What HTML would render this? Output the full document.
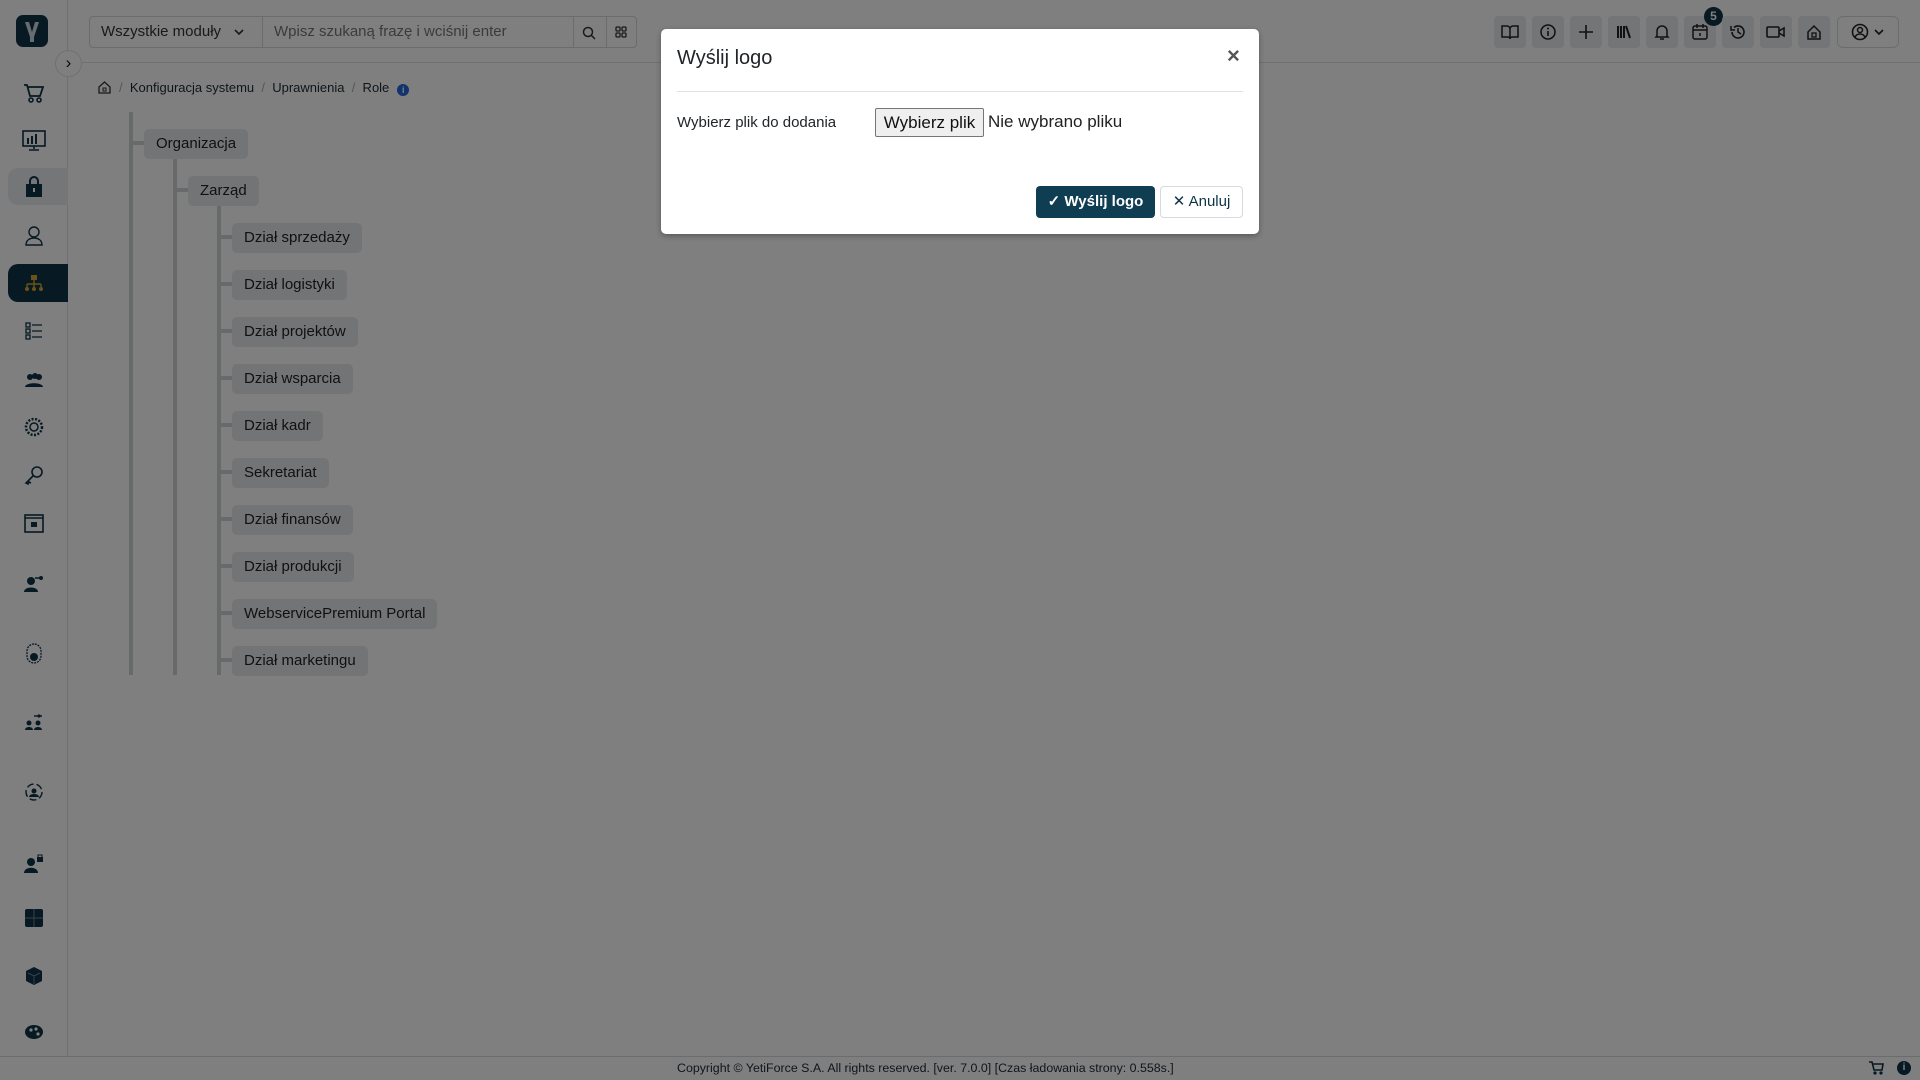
<!DOCTYPE html>
<html><head><meta charset="utf-8"><style>
*{box-sizing:border-box;margin:0;padding:0}
body{width:1920px;height:1080px;position:relative;overflow:hidden;background:#fff;font-family:"Liberation Sans",sans-serif;color:#212529}
.a{position:absolute}
.side{left:0;top:0;width:68px;height:1056px;border-right:1px solid #dde1e5;background:#fff}
.hdr{left:68px;top:0;right:0;height:63px;border-bottom:1px solid #dde1e5}
.ic{position:absolute;left:18px;width:32px;height:32px;display:flex;align-items:center;justify-content:center}
.box{position:absolute;height:30px;background:#e7e9ec;border-radius:5px;font-size:15px;line-height:30px;padding:0 12px;color:#222;white-space:nowrap}
.vl{position:absolute;width:4px;background:#cfd2d6}
.st{position:absolute;height:4px;width:11px;background:#cfd2d6}
.hb{position:absolute;top:16px;width:32px;height:32px;background:#e8eaed;border-radius:4px;display:flex;align-items:center;justify-content:center}
.ov{left:0;top:0;width:1920px;height:1080px;background:rgba(0,0,0,.5)}
</style></head><body>
<div class="a side"></div>
<div class="a hdr"></div>
<div class="a" style="left:16px;top:15px;width:32px;height:32px;background:#0f3347;border-radius:7px"><svg width="32" height="32" viewBox="0 0 32 32"><path d="M9 7 L14 22 L14 27 L18 27 L18 22 L23 7 L19 7 L16 17 L13 7Z" fill="#cfd8dc"/></svg></div>
<div class="a" style="left:55px;top:50px;width:27px;height:27px;border:1px solid #dde1e5;border-radius:50%;background:#fff;font-size:17px;text-align:center;line-height:24px;color:#111">›</div>
<!-- sidebar -->
<div class="a" style="left:8px;top:168px;width:60px;height:37px;background:#e9ecef;border-radius:10px 0 0 10px"></div>
<div class="a" style="left:8px;top:264px;width:60px;height:38px;background:#0f3347;border-radius:10px 0 0 10px"></div>
<div class="ic" style="top:77px"><svg width="22" height="20"><path d="M1 2h3l3 11h10l3-9H5" fill="none" stroke="#0f3347" stroke-width="1.8"/><circle cx="8" cy="17" r="2" fill="none" stroke="#0f3347" stroke-width="1.6"/><circle cx="16" cy="17" r="2" fill="none" stroke="#0f3347" stroke-width="1.6"/></svg></div>
<div class="ic" style="top:125px"><svg width="24" height="22"><rect x="1" y="1" width="22" height="15" fill="none" stroke="#0f3347" stroke-width="1.6"/><rect x="5" y="8" width="2" height="6" fill="#0f3347"/><rect x="9" y="6" width="2" height="8" fill="#0f3347"/><rect x="13" y="4" width="2" height="10" fill="#0f3347"/><path d="M12 16v3M7 20h10" stroke="#0f3347" stroke-width="1.6"/></svg></div>
<div class="ic" style="top:171px"><svg width="20" height="22"><path d="M6 8V5a4 4 0 0 1 8 0v3" fill="none" stroke="#0f3347" stroke-width="2"/><rect x="2" y="8" width="16" height="13" fill="#0f3347"/><rect x="9" y="12" width="2" height="4" fill="#fff"/></svg></div>
<div class="ic" style="top:219px"><svg width="22" height="22"><circle cx="11" cy="8" r="5" fill="none" stroke="#0f3347" stroke-width="1.4"/><path d="M3 21c0-5 4-7 8-7s8 2 8 7z" fill="none" stroke="#0f3347" stroke-width="1.4"/></svg></div>
<div class="ic" style="top:267px"><svg width="20" height="20"><rect x="7" y="2" width="6" height="5" fill="#d4a72c"/><path d="M10 7v4M3 11h14M3 11v3M10 11v3M17 11v3" stroke="#d4a72c" stroke-width="1.4" fill="none"/><circle cx="3" cy="16" r="2" fill="#d4a72c"/><circle cx="10" cy="16" r="2" fill="#d4a72c"/><circle cx="17" cy="16" r="2" fill="#d4a72c"/></svg></div>
<div class="ic" style="top:315px"><svg width="20" height="20"><rect x="2" y="2" width="4" height="4" fill="none" stroke="#0f3347" stroke-width="1.3"/><rect x="2" y="8" width="4" height="4" fill="none" stroke="#0f3347" stroke-width="1.3"/><rect x="2" y="14" width="4" height="4" fill="none" stroke="#0f3347" stroke-width="1.3"/><path d="M8 4h10M8 10h10M8 16h10" stroke="#0f3347" stroke-width="1.3"/></svg></div>
<div class="ic" style="top:364px"><svg width="20" height="16"><circle cx="6" cy="5" r="3" fill="#0f3347"/><circle cx="11" cy="4" r="3" fill="#0f3347"/><circle cx="15" cy="5" r="3" fill="#0f3347"/><path d="M1 15c0-5 18-5 18 0z" fill="#0f3347"/></svg></div>
<div class="ic" style="top:411px"><svg width="20" height="20"><circle cx="10" cy="10" r="8" fill="none" stroke="#0f3347" stroke-width="2.5" stroke-dasharray="2 1.5"/><circle cx="10" cy="10" r="4" fill="none" stroke="#0f3347" stroke-width="1.5"/></svg></div>
<div class="ic" style="top:459px"><svg width="20" height="20"><circle cx="13" cy="7" r="5" fill="none" stroke="#0f3347" stroke-width="1.6"/><path d="M9 11L2 18l2 1 1-2 2 1" fill="none" stroke="#0f3347" stroke-width="1.6"/></svg></div>
<div class="ic" style="top:507px"><svg width="20" height="20"><rect x="1" y="2" width="18" height="17" fill="none" stroke="#0f3347" stroke-width="1.6"/><path d="M1 5h18" stroke="#0f3347" stroke-width="1.6"/><rect x="7" y="9" width="6" height="5" fill="#0f3347"/></svg></div>
<div class="ic" style="top:567px"><svg width="20" height="20"><circle cx="7" cy="8" r="4" fill="#0f3347"/><path d="M0 19c0-6 14-6 14 0z" fill="#0f3347"/><path d="M11 5h7" stroke="#0f3347" stroke-width="1.5"/><circle cx="17" cy="5" r="2" fill="#0f3347"/></svg></div>
<div class="ic" style="top:637px"><svg width="18" height="22"><path d="M9 2a7 7 0 0 0-7 7v5a7 7 0 0 0 14 0V9a7 7 0 0 0-7-7z" fill="none" stroke="#0f3347" stroke-width="1.3" stroke-dasharray="2 1"/><circle cx="9" cy="15" r="4" fill="#0f3347"/></svg></div>
<div class="ic" style="top:706px"><svg width="20" height="16"><path d="M10 2h8" stroke="#0f3347" stroke-width="1.4"/><circle cx="15" cy="2" r="1.6" fill="#0f3347"/><circle cx="5" cy="9" r="2.5" fill="#0f3347"/><circle cx="14" cy="9" r="2.5" fill="#0f3347"/><path d="M1 16c0-4 8-4 8 0zM10 16c0-4 8-4 8 0z" fill="#0f3347"/></svg></div>
<div class="ic" style="top:776px"><svg width="20" height="20"><circle cx="10" cy="10" r="8" fill="none" stroke="#0f3347" stroke-width="1.4" stroke-dasharray="7 3"/><circle cx="10" cy="9" r="2.5" fill="#0f3347"/><path d="M5 15c0-4 10-4 10 0z" fill="#0f3347"/></svg></div>
<div class="ic" style="top:847px"><svg width="20" height="20"><circle cx="7" cy="9" r="4" fill="#0f3347"/><path d="M0 20c0-7 14-7 14 0z" fill="#0f3347"/><rect x="13" y="4" width="6" height="5" fill="#0f3347"/><path d="M14 4V2h4v2" fill="none" stroke="#0f3347"/></svg></div>
<div class="ic" style="top:902px"><svg width="20" height="20"><rect x="1" y="1" width="18" height="18" rx="2" fill="#0f3347"/><path d="M10 1v18M1 10h18" stroke="#708390" stroke-width="1"/></svg></div>
<div class="ic" style="top:960px"><svg width="20" height="20"><path d="M10 1l8 4v10l-8 4-8-4V5z" fill="#0f3347"/><path d="M4 7l6 3 6-3M10 10v8" stroke="#708390" stroke-width="1" fill="none"/></svg></div>
<div class="ic" style="top:1016px"><svg width="20" height="16"><ellipse cx="10" cy="8" rx="9" ry="7" fill="#0f3347"/><circle cx="7" cy="6" r="1.6" fill="#fff"/><circle cx="12" cy="5" r="1.6" fill="#fff"/><circle cx="14" cy="10" r="1.6" fill="#fff"/></svg></div>
<!-- header search -->
<div class="a" style="left:89px;top:16px;width:548px;height:32px;border:1px solid #d6d9dd;border-radius:4px"></div>
<div class="a" style="left:262px;top:16px;width:1px;height:32px;background:#d6d9dd"></div>
<div class="a" style="left:573px;top:16px;width:1px;height:32px;background:#d6d9dd"></div>
<div class="a" style="left:606px;top:16px;width:1px;height:32px;background:#d6d9dd"></div>
<div class="a" style="left:101px;top:23px;font-size:15px;color:#333">Wszystkie moduły</div>
<svg class="a" style="left:233px;top:27px" width="12" height="10"><path d="M2 3l4 4 4-4" stroke="#333" stroke-width="1.6" fill="none"/></svg>
<div class="a" style="left:274px;top:23px;font-size:15px;color:#777">Wpisz szukaną frazę i wciśnij enter</div>
<svg class="a" style="left:582px;top:26px" width="14" height="14"><circle cx="6" cy="6" r="4.5" stroke="#333" stroke-width="1.5" fill="none"/><path d="M9.5 9.5L13 13" stroke="#333" stroke-width="1.5"/></svg>
<svg class="a" style="left:615px;top:26px" width="12" height="12"><g fill="none" stroke="#333" stroke-width="1.3"><rect x="1" y="1" width="4" height="4" rx="1"/><rect x="7" y="1" width="4" height="4" rx="1"/><rect x="1" y="7" width="4" height="4" rx="1"/><rect x="7" y="7" width="4" height="4" rx="1"/></g></svg>
<!-- header right -->
<div class="hb" style="left:1494px"><svg width="18" height="16"><path d="M1 2h5a3 3 0 0 1 3 3v10a2 2 0 0 0-2-2H1zM17 2h-5a3 3 0 0 0-3 3v10a2 2 0 0 1 2-2h6z" fill="none" stroke="#222" stroke-width="1.5"/></svg></div>
<div class="hb" style="left:1532px"><svg width="18" height="18"><circle cx="9" cy="9" r="7" fill="none" stroke="#222" stroke-width="1.5"/><path d="M9 8v5" stroke="#222" stroke-width="1.6"/><circle cx="9" cy="5.5" r="1" fill="#222"/></svg></div>
<div class="hb" style="left:1570px"><svg width="16" height="16"><path d="M8 1v14M1 8h14" stroke="#222" stroke-width="1.6"/></svg></div>
<div class="hb" style="left:1608px"><svg width="16" height="16"><path d="M2 2v12M5 2v12M8 2v12M10 2l4 12" stroke="#222" stroke-width="2"/></svg></div>
<div class="hb" style="left:1646px"><svg width="16" height="18"><path d="M3 13V8a5 5 0 0 1 10 0v5l1 1H2z" fill="none" stroke="#222" stroke-width="1.5"/><path d="M6 16h4" stroke="#222" stroke-width="1.5"/></svg></div>
<div class="hb" style="left:1684px"><svg width="16" height="18"><rect x="1" y="3" width="14" height="13" rx="2" fill="none" stroke="#222" stroke-width="1.5"/><path d="M1 7h14M5 1v4M11 1v4M8 10v3" stroke="#222" stroke-width="1.5"/></svg></div>
<div class="a" style="left:1704px;top:7px;width:19px;height:19px;border-radius:50%;background:#0f3347;color:#fff;font-size:12px;font-weight:bold;text-align:center;line-height:19px">5</div>
<div class="hb" style="left:1722px"><svg width="18" height="18"><path d="M3 9a6 6 0 1 0 2-4.5" fill="none" stroke="#222" stroke-width="1.6"/><path d="M2 3v4h4" fill="none" stroke="#222" stroke-width="1.5"/><path d="M9 5v4l3 2" fill="none" stroke="#222" stroke-width="1.5"/></svg></div>
<div class="hb" style="left:1760px"><svg width="20" height="14"><rect x="1" y="2" width="12" height="10" rx="1" fill="none" stroke="#222" stroke-width="1.6"/><path d="M13 6l5-3v8l-5-3" fill="none" stroke="#222" stroke-width="1.6"/></svg></div>
<div class="hb" style="left:1798px"><svg width="16" height="16"><path d="M2 8l6-6 6 6v7H2z" fill="none" stroke="#222" stroke-width="1.5"/><rect x="6" y="9" width="4" height="4" fill="none" stroke="#222" stroke-width="1.3"/></svg></div>
<div class="a" style="left:1837px;top:16px;width:62px;height:32px;border:1px solid #d6d9dd;border-radius:6px"></div>
<svg class="a" style="left:1851px;top:23px" width="38" height="18"><circle cx="9" cy="9" r="7.5" fill="none" stroke="#222" stroke-width="1.6"/><circle cx="9" cy="7" r="2.5" fill="none" stroke="#222" stroke-width="1.5"/><path d="M4 14c2-4 8-4 10 0" fill="none" stroke="#222" stroke-width="1.5"/><path d="M24 7l4 4 4-4" stroke="#222" stroke-width="1.6" fill="none"/></svg>
<!-- breadcrumb -->
<svg class="a" style="left:98px;top:81px" width="13" height="13"><path d="M1 6l5.5-5 5.5 5v6H1z" fill="none" stroke="#333" stroke-width="1.3"/><rect x="5" y="7" width="3" height="3" fill="none" stroke="#333"/></svg>
<div class="a" style="left:119px;top:80px;font-size:13px;color:#1c2a33;white-space:nowrap"><span style="color:#aaa">/</span>&nbsp;&nbsp;Konfiguracja systemu&nbsp;&nbsp;<span style="color:#aaa">/</span>&nbsp;&nbsp;Uprawnienia&nbsp;&nbsp;<span style="color:#aaa">/</span>&nbsp;&nbsp;Role<span style="display:inline-block;margin-left:8px;width:12px;height:12px;border-radius:50%;background:#2767d8;color:#fff;font-size:9px;text-align:center;line-height:12px;font-weight:bold;vertical-align:-1px">i</span></div>
<!-- tree -->
<div class="vl" style="left:129px;top:112px;height:563px"></div>
<div class="vl" style="left:173px;top:159px;height:516px"></div>
<div class="vl" style="left:217px;top:205px;height:470px"></div>
<div class="st" style="left:133px;top:141px"></div><div class="box" style="left:144px;top:129px">Organizacja</div>
<div class="st" style="left:177px;top:188px"></div><div class="box" style="left:188px;top:176px">Zarząd</div>
<div class="st" style="left:221px;top:235px"></div><div class="box" style="left:232px;top:223px">Dział sprzedaży</div>
<div class="st" style="left:221px;top:282px"></div><div class="box" style="left:232px;top:270px">Dział logistyki</div>
<div class="st" style="left:221px;top:329px"></div><div class="box" style="left:232px;top:317px">Dział projektów</div>
<div class="st" style="left:221px;top:376px"></div><div class="box" style="left:232px;top:364px">Dział wsparcia</div>
<div class="st" style="left:221px;top:423px"></div><div class="box" style="left:232px;top:411px">Dział kadr</div>
<div class="st" style="left:221px;top:470px"></div><div class="box" style="left:232px;top:458px">Sekretariat</div>
<div class="st" style="left:221px;top:517px"></div><div class="box" style="left:232px;top:505px">Dział finansów</div>
<div class="st" style="left:221px;top:564px"></div><div class="box" style="left:232px;top:552px">Dział produkcji</div>
<div class="st" style="left:221px;top:611px"></div><div class="box" style="left:232px;top:599px">WebservicePremium Portal</div>
<div class="st" style="left:221px;top:658px"></div><div class="box" style="left:232px;top:646px">Dział marketingu</div>
<!-- footer -->
<div class="a" style="left:0;top:1056px;width:1920px;height:1px;background:#d6d9dd"></div>
<div class="a" style="left:677px;top:1061px;font-size:12.4px;color:#1c2a33;white-space:nowrap">Copyright © YetiForce S.A. All rights reserved. [ver. 7.0.0] [Czas ładowania strony: 0.558s.]</div>
<svg class="a" style="left:1868px;top:1060px" width="16" height="16"><path d="M1 2h3l2 8h8l1-6H5" fill="none" stroke="#0f3347" stroke-width="1.6"/><circle cx="7" cy="13" r="1.6" fill="#0f3347"/><circle cx="13" cy="13" r="1.6" fill="#0f3347"/></svg>
<div class="a" style="left:1897px;top:1061px;width:14px;height:14px;border-radius:50%;background:#0f3347;color:#fff;font-size:10px;text-align:center;line-height:14px;font-weight:bold">i</div>
<!-- overlay -->
<div class="a ov"></div>
<!-- modal -->
<div class="a" style="left:661px;top:29px;width:598px;height:205px;background:#fff;border-radius:5px;box-shadow:0 2px 6px rgba(0,0,0,.3)">
 <div class="a" style="left:16px;top:18px;font-size:20px;color:#212529;white-space:nowrap">Wyślij logo</div>
 <div class="a" style="left:566px;top:14px;font-size:22px;font-weight:bold;color:#555">×</div>
 <div class="a" style="left:16px;top:62px;width:566px;height:1px;background:#dee2e6"></div>
 <div class="a" style="left:16px;top:85px;font-size:15px;color:#212529;white-space:nowrap">Wybierz plik do dodania</div>
 <div class="a" style="left:214px;top:79px;width:109px;height:29px;border:1px solid #767676;border-radius:2px;background:#efefef;font-size:17px;line-height:27px;text-align:center;color:#111;white-space:nowrap">Wybierz plik</div>
 <div class="a" style="left:327px;top:83px;font-size:17px;color:#222;white-space:nowrap">Nie wybrano pliku</div>
 <div class="a" style="left:375px;top:157px;width:119px;height:32px;background:#0f3d52;border-radius:4px;color:#fff;font-size:15px;font-weight:bold;line-height:32px;text-align:center;white-space:nowrap">✓ Wyślij logo</div>
 <div class="a" style="left:499px;top:157px;width:83px;height:32px;border:1px solid #d6d9dd;border-radius:4px;color:#0f3347;font-size:15px;line-height:30px;text-align:center;white-space:nowrap">✕ Anuluj</div>
</div>
</body></html>
